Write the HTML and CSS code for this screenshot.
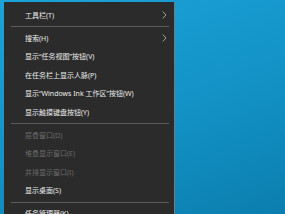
FILE: index.html
```html
<!DOCTYPE html>
<html lang="zh-CN">
<head>
<meta charset="utf-8">
<link rel="stylesheet" href="styles.css">
</head>
<body>
<div class="menu">
  <div class="item"><span>工具栏(T)</span><svg class="chev" width="5" height="8" viewBox="0 0 5 8"><path d="M0.8 0.6 L4 4 L0.8 7.4" fill="none" stroke="#b0b0b0" stroke-width="0.9"/></svg></div>
  <div class="sep"></div>
  <div class="item"><span>搜索(H)</span><svg class="chev" width="5" height="8" viewBox="0 0 5 8"><path d="M0.8 0.6 L4 4 L0.8 7.4" fill="none" stroke="#b0b0b0" stroke-width="0.9"/></svg></div>
  <div class="item"><span>显示“任务视图”按钮(V)</span></div>
  <div class="item"><span>在任务栏上显示人脉(P)</span></div>
  <div class="item"><span>显示“Windows Ink 工作区”按钮(W)</span></div>
  <div class="item"><span>显示触摸键盘按钮(Y)</span></div>
  <div class="sep"></div>
  <div class="item disabled"><span>层叠窗口(D)</span></div>
  <div class="item disabled"><span>堆叠显示窗口(E)</span></div>
  <div class="item disabled"><span>并排显示窗口(I)</span></div>
  <div class="item"><span>显示桌面(S)</span></div>
  <div class="sep"></div>
  <div class="item"><span>任务管理器(K)</span></div>
</div>
</body>
</html>
```
FILE: styles.css
```css
html, body {
  margin: 0;
  padding: 0;
  width: 285px;
  height: 214px;
  overflow: hidden;
}
body {
  background: linear-gradient(160deg, #1ba3da 0%, #1392c6 55%, #0b7eae 100%);
  font-family: "Noto Sans", "Noto Sans CJK SC", sans-serif;
}
.menu {
  margin: 2px 0 0 4px;
  width: 171px;
  height: 230px;
  background: #2b2b2b;
  border-right: 1px solid #7a7a7a;
  padding-top: 3.75px;
  box-sizing: border-box;
}
.item {
  height: 18.5px;
  display: flex;
  align-items: center;
  justify-content: space-between;
  padding: 0 7px 0 21px;
  color: #ececec;
  font-size: 7px;
  line-height: 1;
  white-space: nowrap;
}
.item.disabled {
  color: #6b6b6b;
}
.chev {
  display: block;
}
.sep {
  height: 4.5px;
  display: flex;
  align-items: center;
  padding: 0 5px 0 7px;
}
.sep::before {
  content: "";
  flex: 1;
  height: 1px;
  background: #5c5c5c;
}
```
